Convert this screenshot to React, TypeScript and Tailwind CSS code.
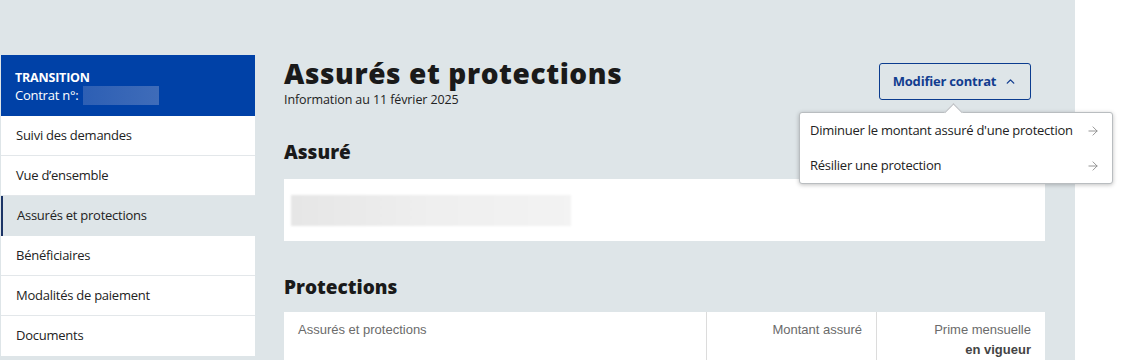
import { ChevronUp, ArrowRight } from "lucide-react";

const navItems = [
  "Suivi des demandes",
  "Vue d’ensemble",
  "Assurés et protections",
  "Bénéficiaires",
  "Modalités de paiement",
  "Documents",
];

const menuItems = [
  "Diminuer le montant assuré d'une protection",
  "Résilier une protection",
];

export default function App() {
  return (
    <div className="h-[360px] w-[1131px] overflow-hidden bg-white font-['Open_Sans',sans-serif] text-[#222]">
      <div className="flex h-full w-[1075px] bg-[#dee5e8] pl-[1px] pt-[55px]">
        {/* sidebar */}
        <aside className="w-[254px] shrink-0">
          <div className="h-[61px] bg-[#0041a7] px-[14px] pt-[15px] text-white">
            <div className="text-[12.5px] font-bold leading-[16px] tracking-[-0.2px]">TRANSITION</div>
            <div className="flex items-center text-[13px] leading-[19px] tracking-[-0.25px]">
              Contrat n°:
              <span className="ml-[5px] h-[19px] w-[76px] bg-gradient-to-r from-[#2d5fb4] to-[#3f6cb9]" />
            </div>
          </div>
          {navItems.map((item) => {
            const active = item === "Assurés et protections";
            return (
              <div
                key={item}
                className={
                  active
                    ? "flex h-[40px] items-center border-l-2 border-[#1c3466] bg-[#dee5e8] pl-[14px] text-[13px] tracking-[-0.25px]"
                    : "flex h-[40px] items-center border-b border-[#e3e7ea] bg-white pl-[15px] text-[13px] tracking-[-0.25px] last:border-b-0"
                }
              >
                {item}
              </div>
            );
          })}
        </aside>

        {/* main */}
        <main className="ml-[29px] w-[761px]">
          <div className="flex items-start justify-between pr-[14px]">
            <div>
              <h1 className="mt-[1px] text-[28px] font-extrabold leading-[34px] tracking-[0.6px] text-[#1a1a1a]">
                Assurés et protections
              </h1>
              <p className="mt-[2px] text-[12.5px] leading-[16px] tracking-[-0.1px] text-[#222]">
                Information au 11 février 2025
              </p>
            </div>
            <div className="relative mt-[8px]">
              <button className="flex h-[37px] w-[152px] items-center justify-center gap-[8px] rounded-[3px] border border-[#0b3c8f] text-[13px] font-bold tracking-[-0.2px] text-[#123d8f]">
                Modifier contrat
                <ChevronUp size={13} strokeWidth={2.5} />
              </button>
              <div className="absolute left-[-80px] top-[49px] z-10 w-[314px] rounded-[3px] border border-[#b9bdc0] bg-white shadow-[0_1px_4px_rgba(0,0,0,0.25)]">
                <div className="absolute left-[147px] top-[-7px] h-[13px] w-[13px] rotate-45 border-l border-t border-[#b9bdc0] bg-white" />
                {menuItems.map((m) => (
                  <div
                    key={m}
                    className="relative flex h-[35px] items-center justify-between whitespace-nowrap pl-[10px] pr-[12px] text-[13px] tracking-[-0.25px] text-[#222] first:mt-[1px]"
                  >
                    {m}
                    <ArrowRight size={14} strokeWidth={1.5} className="text-[#888]" />
                  </div>
                ))}
              </div>
            </div>
          </div>

          <h2 className="mt-[32px] text-[19px] font-extrabold leading-[24px] text-[#1a1a1a]">
            Assuré
          </h2>
          <div className="mt-[15px] flex h-[62px] items-center bg-white px-[7px]">
            <div className="h-[31px] w-[280px] bg-gradient-to-r from-[#e6e6e6] via-[#efefef] to-[#f3f3f3] blur-[1px]" />
          </div>

          <h2 className="mt-[34px] text-[19px] font-extrabold leading-[24px] text-[#1a1a1a]">
            Protections
          </h2>
          <div className="mt-[13px] flex bg-white font-['Liberation_Sans',Arial,sans-serif] text-[13px] leading-[20px] text-[#6b6b6b]">
            <div className="h-[60px] w-[422px] px-[14px] pt-[8px]">
              Assurés et protections
            </div>
            <div className="h-[60px] w-[170px] border-l border-[#dcdcdc] px-[14px] pt-[8px] text-right">
              Montant assuré
            </div>
            <div className="h-[60px] w-[169px] border-l border-[#dcdcdc] px-[14px] pt-[8px] text-right">
              Prime mensuelle
              <div className="font-bold text-[#444]">en vigueur</div>
            </div>
          </div>
        </main>
      </div>
    </div>
  );
}
